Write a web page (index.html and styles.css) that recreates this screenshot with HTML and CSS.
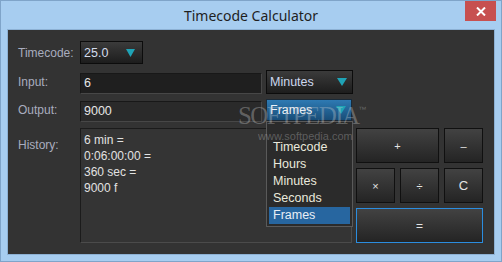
FILE: index.html
```html
<!DOCTYPE html>
<html>
<head>
<meta charset="utf-8">
<link rel="stylesheet" href="styles.css">
</head>
<body>
<div class="window">
  <div class="titlebar">
    <div class="title">Timecode Calculator</div>
    <div class="close"><svg width="10" height="9" viewBox="0 0 10 9"><path d="M1 0.5 L9 8.5 M9 0.5 L1 8.5" stroke="#fff" stroke-width="2"/></svg></div>
  </div>
  <div class="content">
    <div class="row row1">
      <div class="label">Timecode:</div>
      <div class="combo combo-tc"><span>25.0</span><svg class="tri" width="9" height="8" viewBox="0 0 9 8"><path d="M0 0 H9 L4.5 8 Z" fill="#1fa3b6"/></svg></div>
    </div>
    <div class="row row2">
      <div class="label">Input:</div>
      <div class="field field-in">6</div>
      <div class="combo combo-unit"><span>Minutes</span><svg class="tri" width="10" height="8" viewBox="0 0 10 8"><path d="M0 0 H10 L5 8 Z" fill="#1fa3b6"/></svg></div>
    </div>
    <div class="row row3">
      <div class="label">Output:</div>
      <div class="field field-out">9000</div>
      <div class="combo combo-unit combo-open"><span>Frames</span><svg class="tri" width="10" height="8" viewBox="0 0 10 8"><path d="M0 0 H10 L5 8 Z" fill="#1fa3b6"/></svg></div>
    </div>
    <div class="row row4">
      <div class="label label-hist">History:</div>
      <div class="history">
        <div>6 min =</div>
        <div>0:06:00:00 =</div>
        <div>360 sec =</div>
        <div>9000 f</div>
      </div>
      <div class="keys">
        <div class="key key-wide">+</div>
        <div class="key">&#8211;</div>
        <div class="key">&#215;</div>
        <div class="key">&#247;</div>
        <div class="key key-c">C</div>
        <div class="key key-eq">=</div>
      </div>
    </div>
    <div class="dropdown">
      <div class="item">Timecode</div>
      <div class="item">Hours</div>
      <div class="item">Minutes</div>
      <div class="item">Seconds</div>
      <div class="item item-sel">Frames</div>
    </div>
    <div class="watermark">
      <div class="wm-big">SOFTPEDIA<sup>&#8482;</sup></div>
      <div class="wm-url">www.softpedia.com</div>
    </div>
  </div>
</div>
</body>
</html>
```

FILE: styles.css
```css
* { box-sizing: border-box; }
html, body { margin: 0; padding: 0; }
body { width: 502px; height: 262px; overflow: hidden; font-family: "Liberation Sans", Arial, sans-serif; }

.window {
  width: 502px; height: 262px;
  border: 1px solid #7fa4c9;
  background: #a7cdf0;
  padding: 0 6px 6px 6px;
  display: flex; flex-direction: column;
}
.titlebar {
  height: 28px; position: relative;
  display: flex; align-items: center; justify-content: center;
}
.title {
  font-family: "Noto Sans", sans-serif; font-size: 14px; color: #1f1f1f;
  margin-top: 1px;
}
.close {
  position: absolute; right: -1px; top: 0; width: 31px; height: 20px;
  background: #c75050; display: flex; align-items: center; justify-content: center;
}
.content {
  position: relative;
  height: 226px;
  border: 1px solid #8db1d4;
  background: #333333;
  padding: 11px 0 0 10px;
  display: flex; flex-direction: column;
}
.row { display: flex; align-items: center; }
.label { width: 62px; font-size: 12px; color: #a9adbf; }
.row1 { height: 23px; }
.row2 { height: 24px; margin-top: 6px; }
.row3 { height: 22px; margin-top: 5px; }
.row4 { margin-top: 7px; align-items: flex-start; }

.combo {
  display: flex; align-items: center; justify-content: space-between;
  border: 1px solid #0c0c0c;
  background: linear-gradient(#3b3b3b, #1d1d1d);
  font-size: 12.5px; color: #cdd8ee;
}
.combo-tc { width: 63px; height: 23px; padding: 0 7px 0 3px; }
.combo-tc span { font-size: 12.5px; color: #d4dcec; }
.combo-unit { width: 87px; height: 24px; margin-left: 4px; padding: 0 5px 0 3px; }
.combo-open {
  height: 22px; width: 86px;
  background: linear-gradient(#2e7ab3, #184d78);
  border-color: #1a2a38;
  color: #eef2f8;
}
.tri { display: block; }

.field {
  width: 182px; height: 21px; margin-top: 2px;
  border: 1px solid #181818; border-right-color: #474747; border-bottom-color: #474747;
  padding: 0 3px; font-size: 12.5px; color: #e6e6e6;
  display: flex; align-items: center;
}
.field-in { background: #1f1f1f; }
.field-out { background: #2a2a2a; }

.label-hist { padding-top: 10px; }
.history {
  width: 272px; height: 115px;
  border: 1px solid #1b1b1b; border-right-color: #4b4b4b; border-bottom-color: #4b4b4b;
  background: #343434;
  padding: 3px 3px;
  font-size: 12px; line-height: 16px; color: #e2e2e2;
}
.keys {
  margin-left: 4px;
  display: grid;
  grid-template-columns: 39px 39px 39px;
  grid-template-rows: 35px 35px 35px;
  gap: 5px;
}
.key {
  border: 1px solid #101010;
  background: linear-gradient(#424242, #242424);
  color: #e4e4e4; font-size: 11px;
  display: flex; align-items: center; justify-content: center;
}
.key-wide { grid-column: span 2; }
.key-c { font-size: 13px; }
.key-eq { grid-column: span 3; border-color: #2b8ddf; font-size: 12px; }

.dropdown {
  position: absolute; left: 258px; top: 91px;
  width: 87px; height: 106px;
  border: 1px solid #5a5a5a;
  background: #2b2b2b;
  padding: 17px 2px 2px 2px;
}
.item {
  height: 17px; line-height: 17px; padding-left: 4px;
  font-size: 12.5px; color: #e9e9dc;
}
.item-sel { background: #2766a0; color: #e8eef6; }

.watermark { position: absolute; left: 230px; top: 67px; pointer-events: none; }
.wm-big {
  font-family: "Liberation Serif", serif; font-size: 25px; letter-spacing: -1.6px;
  color: rgba(215, 215, 215, 0.32); line-height: 25px;
}
.wm-big sup { font-family: "Liberation Sans", sans-serif; font-size: 8px; letter-spacing: 0; vertical-align: 12px; }
.wm-url {
  margin-left: 20px; margin-top: 2px;
  font-size: 11px; color: rgba(215, 215, 215, 0.3);
}
```
